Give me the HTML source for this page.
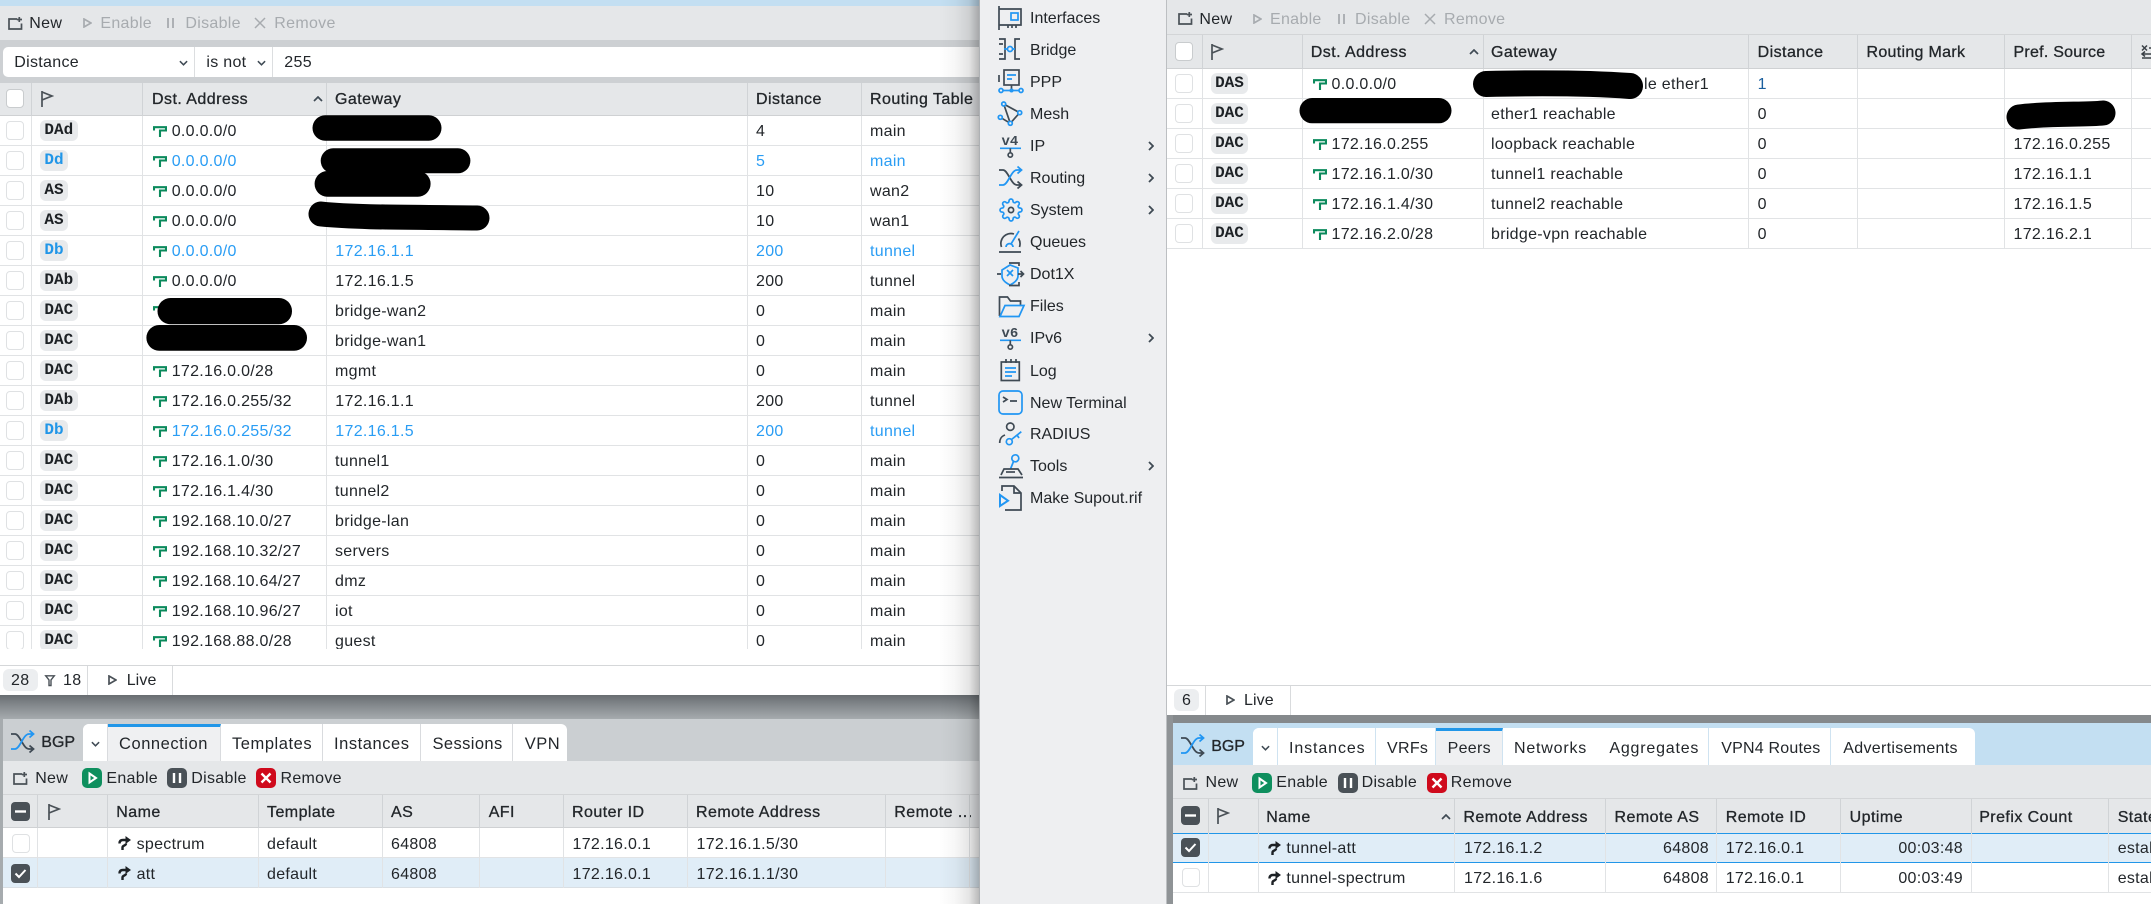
<!DOCTYPE html>
<html><head><meta charset="utf-8"><title>RouterOS</title>
<style>
html,body{margin:0;padding:0;width:2151px;height:904px;overflow:hidden;background:#fff}
body{position:relative;font-family:"Liberation Sans",sans-serif;font-size:16px;color:#22262a}
.a{position:absolute}
.x{position:absolute;white-space:nowrap;line-height:20px;font-size:16px;letter-spacing:.3px;color:#22262a;margin-top:1px}
.h{-webkit-text-stroke:.3px #22262a;letter-spacing:.45px}
.dis{color:#a7abaf}
.tab{letter-spacing:.55px;font-size:16.5px}
.tb{position:absolute;top:0;height:100%;background:#fff;border-right:1px solid #d9dbde;box-sizing:border-box}
.tc{border-right-color:#cfe3f1}
.v{position:absolute;width:1px;background:#e1e3e5}
.vh{position:absolute;width:1px;background:#d0d3d6}
.r{position:absolute;height:30px;box-sizing:border-box;border-bottom:1px solid #e1e3e5}
.r>span{position:absolute;top:6px;white-space:nowrap;line-height:20px;letter-spacing:.3px}
.b>span{color:#2a9df4}
.g{position:absolute;top:4px;height:21px;padding:0 4.4px;font:bold 16px/21px "Liberation Mono",monospace;background:#e8eaec;border-radius:6px;color:#1d2125}
.b>.g{color:#2196e8}
.c{position:absolute;width:18px;height:19px;border:1px solid #dfe1e3;border-radius:4px;background:#fff;box-sizing:border-box}
.ck{position:absolute;width:19px;height:19px;border-radius:4px;background:#4a5157}
svg{position:absolute;overflow:visible}
.ri{width:14px;height:11px;top:10px}
.m{position:absolute;left:1030px;line-height:20px;white-space:nowrap;color:#22262a;margin-top:1px}
.ic{left:998px;width:26px;height:26px}
.cv{left:1148px;width:6px;height:10px}
.L{fill:none;stroke:#3f4a54;stroke-width:1.7}
.B{fill:none;stroke:#2196f3;stroke-width:1.7}
</style></head>
<body>
<svg width="0" height="0" style="position:absolute">
<defs>
<symbol id="rt" viewBox="0 0 14 11"><path d="M1 4.500V1.200H13V4.500H7V11" fill="none" stroke="#0b8a5c" stroke-width="2.100"/></symbol>
<symbol id="pe" viewBox="0 0 13 14"><path d="M1.500 7.500C1.500 5 3 4 5 4H9" fill="none" stroke="#1d2125" stroke-width="2.400"/><path d="M7.500 0L13 4 7.500 8Z" fill="#1d2125"/><path d="M8 7.500c0 2.500-3.500 1.500-3.500 4V14" fill="none" stroke="#1d2125" stroke-width="2.400"/></symbol>
<symbol id="nw" viewBox="0 0 15 13"><path d="M9 2H1V12H13.500V6.500M11.300 0V5M8.800 2.500H14" fill="none" stroke="#4a5157" stroke-width="1.700"/></symbol>
<symbol id="fl" viewBox="0 0 13 16"><path d="M1 0V16M1 1L11 5 1 9" fill="none" stroke="#4a5157" stroke-width="1.700"/></symbol>
<symbol id="sf" viewBox="0 0 26 26"><path d="M1 5H5C10 5 13 20 19 20H23M19.500 16.500L23.500 20 19.500 23.500" fill="none" stroke="#3f4a54" stroke-width="1.800"/><path d="M1 20H5C10 20 13 5 19 5H23M19.500 1.500L23.500 5 19.500 8.500" fill="none" stroke="#2196f3" stroke-width="1.800"/></symbol>
<symbol id="gr" viewBox="0 0 20 20"><rect width="20" height="20" rx="5" fill="#0e8f5e"/><path d="M7.500 5.500L14 10 7.500 14.500Z" fill="none" stroke="#fff" stroke-width="2"/></symbol>
<symbol id="gy" viewBox="0 0 20 20"><rect width="20" height="20" rx="5" fill="#4a5157"/><path d="M7 5V15M13 5V15" stroke="#fff" stroke-width="2.400"/></symbol>
<symbol id="rd" viewBox="0 0 20 20"><rect width="20" height="20" rx="5" fill="#cf0a1c"/><path d="M5.500 5.500L14.500 14.500M14.500 5.500L5.500 14.500" stroke="#fff" stroke-width="2.400"/></symbol>
<symbol id="pl" viewBox="0 0 9 10"><path d="M1 1L8 5 1 9Z" fill="none" stroke="currentColor" stroke-width="1.700"/></symbol>
<symbol id="chv" viewBox="0 0 10 6"><path d="M1 1L5 5 9 1" fill="none" stroke="#3f4a54" stroke-width="1.700"/></symbol>
<symbol id="chr" viewBox="0 0 6 10"><path d="M1 1L5 5 1 9" fill="none" stroke="#3f4a54" stroke-width="1.800"/></symbol>
<symbol id="up" viewBox="0 0 10 6"><path d="M1 5L5 1 9 5" fill="none" stroke="#3f4a54" stroke-width="1.700"/></symbol>
</defs></svg>

<!-- LEFT WINDOW -->
<div class="a" style="left:0;top:0;width:979px;height:6px;background:#c3dff2"></div>
<div class="a" style="left:0;top:6px;width:979px;height:34px;background:#e5e7e9"></div>
<div class="a" style="left:0;top:40px;width:979px;height:43px;background:#cdd0d3"></div>
<div class="a" style="left:3px;top:47px;width:976px;height:30px;background:#fff;border-radius:5px 0 0 5px"></div>
<svg style="left:8px;top:17px;width:15px;height:13px"><use href="#nw"/></svg>
<span class="x" style="left:29.3px;top:13px">New</span>
<svg class="dis" style="left:82.5px;top:18px;width:9px;height:10px"><use href="#pl"/></svg>
<span class="x dis" style="left:100.4px;top:13px">Enable</span>
<svg style="left:167px;top:18px;width:8px;height:10px"><path d="M1 0V10M6 0V10" stroke="#a7abaf" stroke-width="1.800"/></svg>
<span class="x dis" style="left:185.4px;top:13px">Disable</span>
<svg style="left:255px;top:18px;width:10px;height:10px"><path d="M0 0L10 10M10 0L0 10" stroke="#a7abaf" stroke-width="1.500"/></svg>
<span class="x dis" style="left:274.3px;top:13px">Remove</span>

<span class="x" style="left:14.3px;top:52px">Distance</span>
<svg style="left:179px;top:60px;width:9px;height:6px"><use href="#chv"/></svg>
<div class="a" style="left:194px;top:47px;width:1px;height:30px;background:#dcdee0"></div>
<span class="x" style="left:206.4px;top:52px">is not</span>
<svg style="left:257px;top:60px;width:9px;height:6px"><use href="#chv"/></svg>
<div class="a" style="left:272px;top:47px;width:1px;height:30px;background:#dcdee0"></div>
<span class="x" style="left:284.3px;top:52px">255</span>

<div class="a" style="left:0;top:83px;width:979px;height:33px;background:#e5e7e9;border-bottom:1px solid #cfd1d3;box-sizing:border-box"></div>
<div class="c" style="left:5.7px;top:89px;border-color:#c9ccce"></div>
<svg style="left:41px;top:91px;width:13px;height:16px"><use href="#fl"/></svg>
<span class="x h" style="left:152px;top:89px">Dst. Address</span>
<svg style="left:313px;top:96px;width:10px;height:6px"><use href="#up"/></svg>
<span class="x h" style="left:335px;top:89px">Gateway</span>
<span class="x h" style="left:756px;top:89px">Distance</span>
<span class="x h" style="left:870px;top:89px">Routing Table</span>
<div class="vh" style="left:31px;top:83px;height:33px"></div><div class="vh" style="left:142px;top:83px;height:33px"></div><div class="vh" style="left:326px;top:83px;height:33px"></div><div class="vh" style="left:747px;top:83px;height:33px"></div><div class="vh" style="left:861px;top:83px;height:33px"></div>

<div class="a" style="left:0;top:116px;width:979px;height:533px;overflow:hidden">
<div class="r" style="top:0;left:0;width:979px"><i class="c" style="left:5.7px;top:5px"></i><b class="g" style="left:40px">DAd</b><svg class="ri" style="left:152.5px"><use href="#rt"/></svg><span style="left:171.7px">0.0.0.0/0</span><span style="left:756px">4</span><span style="left:870px">main</span></div>
<div class="r b" style="top:30px;left:0;width:979px"><i class="c" style="left:5.7px;top:5px"></i><b class="g" style="left:40px">Dd</b><svg class="ri" style="left:152.5px"><use href="#rt"/></svg><span style="left:171.7px">0.0.0.0/0</span><span style="left:756px">5</span><span style="left:870px">main</span></div>
<div class="r" style="top:60px;left:0;width:979px"><i class="c" style="left:5.7px;top:5px"></i><b class="g" style="left:40px">AS</b><svg class="ri" style="left:152.5px"><use href="#rt"/></svg><span style="left:171.7px">0.0.0.0/0</span><span style="left:756px">10</span><span style="left:870px">wan2</span></div>
<div class="r" style="top:90px;left:0;width:979px"><i class="c" style="left:5.7px;top:5px"></i><b class="g" style="left:40px">AS</b><svg class="ri" style="left:152.5px"><use href="#rt"/></svg><span style="left:171.7px">0.0.0.0/0</span><span style="left:756px">10</span><span style="left:870px">wan1</span></div>
<div class="r b" style="top:120px;left:0;width:979px"><i class="c" style="left:5.7px;top:5px"></i><b class="g" style="left:40px">Db</b><svg class="ri" style="left:152.5px"><use href="#rt"/></svg><span style="left:171.7px">0.0.0.0/0</span><span style="left:335.3px">172.16.1.1</span><span style="left:756px">200</span><span style="left:870px">tunnel</span></div>
<div class="r" style="top:150px;left:0;width:979px"><i class="c" style="left:5.7px;top:5px"></i><b class="g" style="left:40px">DAb</b><svg class="ri" style="left:152.5px"><use href="#rt"/></svg><span style="left:171.7px">0.0.0.0/0</span><span style="left:335.3px">172.16.1.5</span><span style="left:756px">200</span><span style="left:870px">tunnel</span></div>
<div class="r" style="top:180px;left:0;width:979px"><i class="c" style="left:5.7px;top:5px"></i><b class="g" style="left:40px">DAC</b><svg class="ri" style="left:152.5px"><use href="#rt"/></svg><span style="left:335px">bridge-wan2</span><span style="left:756px">0</span><span style="left:870px">main</span></div>
<div class="r" style="top:210px;left:0;width:979px"><i class="c" style="left:5.7px;top:5px"></i><b class="g" style="left:40px">DAC</b><svg class="ri" style="left:152.5px"><use href="#rt"/></svg><span style="left:335px">bridge-wan1</span><span style="left:756px">0</span><span style="left:870px">main</span></div>
<div class="r" style="top:240px;left:0;width:979px"><i class="c" style="left:5.7px;top:5px"></i><b class="g" style="left:40px">DAC</b><svg class="ri" style="left:152.5px"><use href="#rt"/></svg><span style="left:171.7px">172.16.0.0/28</span><span style="left:335px">mgmt</span><span style="left:756px">0</span><span style="left:870px">main</span></div>
<div class="r" style="top:270px;left:0;width:979px"><i class="c" style="left:5.7px;top:5px"></i><b class="g" style="left:40px">DAb</b><svg class="ri" style="left:152.5px"><use href="#rt"/></svg><span style="left:171.7px">172.16.0.255/32</span><span style="left:335.3px">172.16.1.1</span><span style="left:756px">200</span><span style="left:870px">tunnel</span></div>
<div class="r b" style="top:300px;left:0;width:979px"><i class="c" style="left:5.7px;top:5px"></i><b class="g" style="left:40px">Db</b><svg class="ri" style="left:152.5px"><use href="#rt"/></svg><span style="left:171.7px">172.16.0.255/32</span><span style="left:335.3px">172.16.1.5</span><span style="left:756px">200</span><span style="left:870px">tunnel</span></div>
<div class="r" style="top:330px;left:0;width:979px"><i class="c" style="left:5.7px;top:5px"></i><b class="g" style="left:40px">DAC</b><svg class="ri" style="left:152.5px"><use href="#rt"/></svg><span style="left:171.7px">172.16.1.0/30</span><span style="left:335px">tunnel1</span><span style="left:756px">0</span><span style="left:870px">main</span></div>
<div class="r" style="top:360px;left:0;width:979px"><i class="c" style="left:5.7px;top:5px"></i><b class="g" style="left:40px">DAC</b><svg class="ri" style="left:152.5px"><use href="#rt"/></svg><span style="left:171.7px">172.16.1.4/30</span><span style="left:335px">tunnel2</span><span style="left:756px">0</span><span style="left:870px">main</span></div>
<div class="r" style="top:390px;left:0;width:979px"><i class="c" style="left:5.7px;top:5px"></i><b class="g" style="left:40px">DAC</b><svg class="ri" style="left:152.5px"><use href="#rt"/></svg><span style="left:171.7px">192.168.10.0/27</span><span style="left:335px">bridge-lan</span><span style="left:756px">0</span><span style="left:870px">main</span></div>
<div class="r" style="top:420px;left:0;width:979px"><i class="c" style="left:5.7px;top:5px"></i><b class="g" style="left:40px">DAC</b><svg class="ri" style="left:152.5px"><use href="#rt"/></svg><span style="left:171.7px">192.168.10.32/27</span><span style="left:335px">servers</span><span style="left:756px">0</span><span style="left:870px">main</span></div>
<div class="r" style="top:450px;left:0;width:979px"><i class="c" style="left:5.7px;top:5px"></i><b class="g" style="left:40px">DAC</b><svg class="ri" style="left:152.5px"><use href="#rt"/></svg><span style="left:171.7px">192.168.10.64/27</span><span style="left:335px">dmz</span><span style="left:756px">0</span><span style="left:870px">main</span></div>
<div class="r" style="top:480px;left:0;width:979px"><i class="c" style="left:5.7px;top:5px"></i><b class="g" style="left:40px">DAC</b><svg class="ri" style="left:152.5px"><use href="#rt"/></svg><span style="left:171.7px">192.168.10.96/27</span><span style="left:335px">iot</span><span style="left:756px">0</span><span style="left:870px">main</span></div>
<div class="r" style="top:510px;left:0;width:979px"><i class="c" style="left:5.7px;top:5px"></i><b class="g" style="left:40px">DAC</b><svg class="ri" style="left:152.5px"><use href="#rt"/></svg><span style="left:171.7px">192.168.88.0/28</span><span style="left:335px">guest</span><span style="left:756px">0</span><span style="left:870px">main</span></div>
<div class="v" style="left:31px;top:0;height:533px"></div><div class="v" style="left:142px;top:0;height:533px"></div><div class="v" style="left:326px;top:0;height:533px"></div><div class="v" style="left:747px;top:0;height:533px"></div><div class="v" style="left:861px;top:0;height:533px"></div>
</div>

<div class="a" style="left:0;top:665px;width:979px;height:30px;border-top:1px solid #d5d7d9;box-sizing:border-box;background:#fff"></div>
<div class="a" style="left:3px;top:669px;width:34.5px;height:22px;background:#eceef0;border-radius:6px"></div>
<span class="x" style="left:11px;top:670px">28</span>
<svg style="left:45px;top:675px;width:10px;height:11px"><path d="M.7 .8H9.3L6 5V10.5H4V5Z" fill="none" stroke="#4a5157" stroke-width="1.400"/></svg>
<span class="x" style="left:63px;top:670px">18</span>
<div class="a" style="left:87px;top:666px;width:1px;height:29px;background:#d9dbdd"></div>
<svg style="left:108px;top:675px;width:9px;height:10px;color:#4a5157"><use href="#pl"/></svg>
<span class="x" style="left:126.7px;top:670px;letter-spacing:.1px">Live</span>
<div class="a" style="left:172px;top:666px;width:1px;height:29px;background:#d9dbdd"></div>

<div class="a" style="left:0;top:695px;width:979px;height:24px;background:linear-gradient(#686d71,#7f8488 35%,#a6abae)"></div>
<div class="a" style="left:0;top:719px;width:3px;height:185px;background:#a6abae"></div>
<div class="a" style="left:3px;top:719px;width:976px;height:42px;background:#cbcfd2"></div>
<svg style="left:9.5px;top:729px;width:26px;height:26px"><use href="#sf"/></svg>
<span class="x" style="left:41.3px;top:732px;font-size:16px;letter-spacing:0;-webkit-text-stroke:.3px #22262a">BGP</span>
<div class="a" style="left:83px;top:724px;width:484px;height:37px;border-radius:6px 6px 0 0;overflow:hidden;background:#fff">
 <div class="tb" style="left:0;width:25px"></div>
 <div class="tb" style="left:25px;width:113px;background:#eff0f2;border-top:3px solid #2196e8"></div>
 <div class="tb" style="left:138px;width:102px"></div>
 <div class="tb" style="left:240px;width:98px"></div>
 <div class="tb" style="left:338px;width:92px"></div>
</div>
<svg style="left:91px;top:741px;width:9px;height:6px"><use href="#chv"/></svg>
<span class="x tab" style="left:119px;top:733px">Connection</span>
<span class="x tab" style="left:232px;top:733px">Templates</span>
<span class="x tab" style="left:334px;top:733px">Instances</span>
<span class="x tab" style="left:432.5px;top:733px;letter-spacing:.4px">Sessions</span>
<span class="x tab" style="left:524.7px;top:733px">VPN</span>

<div class="a" style="left:3px;top:761px;width:976px;height:34px;background:#e5e7e9;border-bottom:1px solid #d3d5d7;box-sizing:border-box"></div>
<svg style="left:13.4px;top:772px;width:15px;height:13px"><use href="#nw"/></svg>
<span class="x" style="left:35.2px;top:768px">New</span>
<svg style="left:82px;top:768px;width:20px;height:20px"><use href="#gr"/></svg>
<span class="x" style="left:106.4px;top:768px">Enable</span>
<svg style="left:167px;top:768px;width:20px;height:20px"><use href="#gy"/></svg>
<span class="x" style="left:191.3px;top:768px">Disable</span>
<svg style="left:256px;top:768px;width:20px;height:20px"><use href="#rd"/></svg>
<span class="x" style="left:280.5px;top:768px">Remove</span>

<div class="a" style="left:3px;top:795px;width:976px;height:33px;background:#e5e7e9;border-bottom:1px solid #cfd1d3;box-sizing:border-box"></div>
<div class="ck" style="left:11px;top:802px"><svg style="left:4px;top:8px;width:11px;height:3px"><path d="M0 1.500H11" stroke="#fff" stroke-width="2.400"/></svg></div>
<svg style="left:47.5px;top:804px;width:13px;height:16px"><use href="#fl"/></svg>
<span class="x h" style="left:116.3px;top:802px">Name</span>
<span class="x h" style="left:267px;top:802px">Template</span>
<span class="x h" style="left:391px;top:802px">AS</span>
<span class="x h" style="left:488.7px;top:802px">AFI</span>
<span class="x h" style="left:572px;top:802px">Router ID</span>
<span class="x h" style="left:696px;top:802px">Remote Address</span>
<span class="x h" style="left:894.3px;top:802px">Remote ...</span>
<div class="a" style="left:3px;top:828px;width:976px;height:30px;box-sizing:border-box;border-bottom:1px solid #e1e3e5"></div>
<div class="a" style="left:3px;top:858px;width:976px;height:30px;box-sizing:border-box;border-bottom:1px solid #d9dfe4;background:#e0edf7"></div>
<div class="c" style="left:11.5px;top:834px"></div>
<div class="ck" style="left:11px;top:864px"><svg style="left:4px;top:5px;width:11px;height:9px"><path d="M.5 4.500L4 8 10.500 1" fill="none" stroke="#fff" stroke-width="2"/></svg></div>
<svg style="left:117.500px;top:836px;width:13px;height:14px"><use href="#pe"/></svg>
<span class="x" style="left:136.6px;top:834px">spectrum</span>
<span class="x" style="left:267px;top:834px">default</span>
<span class="x" style="left:391px;top:834px">64808</span>
<span class="x" style="left:572.5px;top:834px">172.16.0.1</span>
<span class="x" style="left:696.5px;top:834px">172.16.1.5/30</span>
<svg style="left:117.500px;top:866px;width:13px;height:14px"><use href="#pe"/></svg>
<span class="x" style="left:136.6px;top:864px">att</span>
<span class="x" style="left:267px;top:864px">default</span>
<span class="x" style="left:391px;top:864px">64808</span>
<span class="x" style="left:572.5px;top:864px">172.16.0.1</span>
<span class="x" style="left:696.5px;top:864px">172.16.1.1/30</span>
<div class="vh" style="left:37px;top:795px;height:33px"></div><div class="vh" style="left:107px;top:795px;height:33px"></div><div class="vh" style="left:258px;top:795px;height:33px"></div><div class="vh" style="left:382px;top:795px;height:33px"></div><div class="vh" style="left:479px;top:795px;height:33px"></div><div class="vh" style="left:563px;top:795px;height:33px"></div><div class="vh" style="left:687px;top:795px;height:33px"></div><div class="vh" style="left:885px;top:795px;height:33px"></div><div class="vh" style="left:969px;top:795px;height:33px"></div>
<div class="v" style="left:37px;top:828px;height:60px"></div><div class="v" style="left:107px;top:828px;height:60px"></div><div class="v" style="left:258px;top:828px;height:60px"></div><div class="v" style="left:382px;top:828px;height:60px"></div><div class="v" style="left:479px;top:828px;height:60px"></div><div class="v" style="left:563px;top:828px;height:60px"></div><div class="v" style="left:687px;top:828px;height:60px"></div><div class="v" style="left:885px;top:828px;height:60px"></div><div class="v" style="left:969px;top:828px;height:60px"></div>

<!-- SHADOW + SIDEBAR -->
<div class="a" style="left:939px;top:0;width:40px;height:904px;background:linear-gradient(90deg,rgba(0,0,0,0),rgba(0,0,0,.03) 40%,rgba(0,0,0,.1) 75%,rgba(0,0,0,.27))"></div>
<div class="a" style="left:979px;top:0;width:188px;height:904px;background:#eeeff1;border-left:1px solid #aeb1b4;border-right:1px solid #bcbfc2;box-sizing:border-box"></div>

<svg class="ic" style="top:5px"><path class="L" d="M1 1V25M1 4H23V20H1M10 20V23M14 20V23M18 20V23"/><rect class="B" x="13" y="8" width="7" height="7"/></svg>
<span class="m" style="top:8px">Interfaces</span>
<svg class="ic" style="top:37px"><path class="L" d="M1 2H7V22H1M1 7H5M1 17H5M22 2H17V22H22"/><path class="B" d="M6 12H9.500M14.500 12H17"/><circle class="B" cx="12" cy="12" r="2.500"/></svg>
<span class="m" style="top:40px">Bridge</span>
<svg class="ic" style="top:69px"><rect class="L" x="6" y="1" width="15" height="15"/><path class="B" d="M9 6H18M9 10H14"/><path class="L" d="M1 6V13M13.500 16V21"/><path class="B" d="M5 21.500H21"/><circle class="B" cx="3" cy="21.500" r="2"/><circle class="B" cx="23" cy="21.500" r="2"/><circle class="B" cx="13.500" cy="21.500" r="1.200"/></svg>
<span class="m" style="top:72px">PPP</span>
<svg class="ic" style="top:101px"><path class="L" d="M5.700 3L21.700 11.700 12.300 22.300 5.700 3M12.300 22.300L2.300 16.300"/><circle cx="5.700" cy="3" r="2" fill="#eeeff1" stroke="#2196f3" stroke-width="1.700"/><circle cx="21.700" cy="11.700" r="2" fill="#eeeff1" stroke="#2196f3" stroke-width="1.700"/><circle cx="12.300" cy="22.300" r="2" fill="#eeeff1" stroke="#2196f3" stroke-width="1.700"/><circle cx="2.300" cy="16.300" r="2" fill="#eeeff1" stroke="#2196f3" stroke-width="1.700"/></svg>
<span class="m" style="top:104px">Mesh</span>
<svg class="ic" style="top:133px"><text x="3.500" y="12" font-family="Liberation Mono" font-weight="700" font-size="14" fill="#3f4a54">v4</text><path class="B" d="M2 15.300H23"/><path class="L" d="M12.300 15.300V19.500"/><circle class="L" cx="12.300" cy="22" r="2.200"/></svg>
<span class="m" style="top:136px">IP</span>
<svg class="cv" style="top:141px"><use href="#chr"/></svg>
<svg class="ic" style="top:165px"><use href="#sf"/></svg>
<span class="m" style="top:168px">Routing</span>
<svg class="cv" style="top:173px"><use href="#chr"/></svg>
<svg class="ic" style="top:197px" viewBox="-1 -1 26 26"><path class="B" d="M19.4 15a1.65 1.65 0 0 0 .33 1.82l.06.06a2 2 0 0 1 0 2.83 2 2 0 0 1-2.83 0l-.06-.06a1.65 1.65 0 0 0-1.82-.33 1.65 1.65 0 0 0-1 1.51V21a2 2 0 0 1-2 2 2 2 0 0 1-2-2v-.09A1.65 1.65 0 0 0 9 19.4a1.65 1.65 0 0 0-1.82.33l-.06.06a2 2 0 0 1-2.83 0 2 2 0 0 1 0-2.83l.06-.06a1.65 1.65 0 0 0 .33-1.82 1.65 1.65 0 0 0-1.51-1H3a2 2 0 0 1-2-2 2 2 0 0 1 2-2h.09A1.65 1.65 0 0 0 4.6 9a1.65 1.65 0 0 0-.33-1.82l-.06-.06a2 2 0 0 1 0-2.83 2 2 0 0 1 2.83 0l.06.06a1.65 1.65 0 0 0 1.82.33H9a1.65 1.65 0 0 0 1-1.51V3a2 2 0 0 1 2-2 2 2 0 0 1 2 2v.09a1.65 1.65 0 0 0 1 1.51 1.65 1.65 0 0 0 1.82-.33l.06-.06a2 2 0 0 1 2.83 0 2 2 0 0 1 0 2.83l-.06.06a1.65 1.65 0 0 0-.33 1.82V9a1.65 1.65 0 0 0 1.51 1H21a2 2 0 0 1 2 2 2 2 0 0 1-2 2h-.09a1.65 1.65 0 0 0-1.51 1z"/><circle class="L" cx="12" cy="12" r="2.600"/></svg>
<span class="m" style="top:200px">System</span>
<svg class="cv" style="top:205px"><use href="#chr"/></svg>
<svg class="ic" style="top:229px"><path class="L" d="M3.500 18A10 10 0 0 1 16 5M20.500 9.500A10 10 0 0 1 21.500 18M1 23H23"/><path class="B" d="M8 18A3.500 3.500 0 0 1 13 15L21 2M13 15A3.500 3.500 0 0 1 15 18"/></svg>
<span class="m" style="top:232px">Queues</span>
<svg class="ic" style="top:261px"><path class="B" d="M4 9L12 4 20 7V15C20 19 16 22 12 24 8 22 4 19 4 15Z"/><path class="B" d="M9 9L15 15M15 9L9 15"/><path class="L" d="M11 2H21V5M11 24.500H21V21M-1 13H3M20 13H25M22.500 10L25.500 13 22.500 16"/></svg>
<span class="m" style="top:264px">Dot1X</span>
<svg class="ic" style="top:293px"><path class="L" d="M1.500 23V4H9.500L12.500 8H22.500V12"/><path class="B" d="M7 12.500H26L21 23.500H2Z"/></svg>
<span class="m" style="top:296px">Files</span>
<svg class="ic" style="top:325px"><text x="3.500" y="12" font-family="Liberation Mono" font-weight="700" font-size="14" fill="#3f4a54">v6</text><path class="B" d="M2 15.300H23"/><path class="L" d="M12.300 15.300V19.500"/><circle class="L" cx="12.300" cy="22" r="2.200"/></svg>
<span class="m" style="top:328px">IPv6</span>
<svg class="cv" style="top:333px"><use href="#chr"/></svg>
<svg class="ic" style="top:358px"><rect class="L" x="3.300" y="4" width="18" height="18.500"/><path class="L" d="M8 1V5M13 1V5M18 1V5"/><path class="B" d="M7 10H18M7 14H18M7 18H14"/></svg>
<span class="m" style="top:361px">Log</span>
<svg class="ic" style="top:390px"><rect class="B" x="1" y="1" width="23" height="23" rx="4"/><path class="L" d="M5 7L9 9.500 5 12M12 11H19"/></svg>
<span class="m" style="top:393px">New Terminal</span>
<svg class="ic" style="top:421px"><circle class="L" cx="12.300" cy="5.700" r="3.700"/><path class="L" d="M1.700 22C1.700 18 3 15.500 7 14"/><circle class="B" cx="11.300" cy="20.700" r="3"/><path class="B" d="M13.500 18.500L23.300 10.700M19 14L21 17"/></svg>
<span class="m" style="top:424px">RADIUS</span>
<svg class="ic" style="top:453px"><circle class="B" cx="17.300" cy="5.300" r="3.500"/><path class="B" d="M15.500 8.500L12.500 16"/><path class="L" d="M3 22L6 16H20L24 22M1 24.500H25"/><path class="L" d="M8 19H17"/></svg>
<span class="m" style="top:456px">Tools</span>
<svg class="cv" style="top:461px"><use href="#chr"/></svg>
<svg class="ic" style="top:485px"><path class="L" d="M4 6V1H16L23 8V25H7"/><path class="L" d="M16 1V8H23"/><path d="M2 10L10 15.700 2 21Z" fill="none" stroke="#2196f3" stroke-width="2"/></svg>
<span class="m" style="top:488px">Make Supout.rif</span>

<!-- RIGHT WINDOW TOP -->
<div class="a" style="left:1167px;top:0;width:984px;height:35px;background:#e5e7e9;border-bottom:1px solid #d3d5d7;box-sizing:border-box"></div>
<svg style="left:1177.500px;top:12px;width:15px;height:13px"><use href="#nw"/></svg>
<span class="x" style="left:1199.400px;top:9px">New</span>
<svg class="dis" style="left:1252.500px;top:14px;width:9px;height:10px"><use href="#pl"/></svg>
<span class="x dis" style="left:1270px;top:9px">Enable</span>
<svg style="left:1337.500px;top:14px;width:8px;height:10px"><path d="M1 0V10M6 0V10" stroke="#a7abaf" stroke-width="1.800"/></svg>
<span class="x dis" style="left:1355px;top:9px">Disable</span>
<svg style="left:1425px;top:14px;width:10px;height:10px"><path d="M0 0L10 10M10 0L0 10" stroke="#a7abaf" stroke-width="1.500"/></svg>
<span class="x dis" style="left:1444px;top:9px">Remove</span>

<div class="a" style="left:1167px;top:35px;width:984px;height:34px;background:#e5e7e9;border-bottom:1px solid #cfd1d3;box-sizing:border-box"></div>
<div class="c" style="left:1175px;top:42px;border-color:#c9ccce"></div>
<svg style="left:1211px;top:44px;width:13px;height:16px"><use href="#fl"/></svg>
<span class="x h" style="left:1310.800px;top:42px">Dst. Address</span>
<svg style="left:1469px;top:49px;width:10px;height:6px"><use href="#up"/></svg>
<span class="x h" style="left:1491px;top:42px">Gateway</span>
<span class="x h" style="left:1757.600px;top:42px">Distance</span>
<span class="x h" style="left:1866.500px;top:42px;letter-spacing:.3px">Routing Mark</span>
<span class="x h" style="left:2013.500px;top:42px;letter-spacing:.25px">Pref. Source</span>
<svg style="left:2141px;top:45px;width:10px;height:15px"><path d="M1 0.500L6 5.500M6 0.500L1 5.500M8 3H10M1 9H10M4 6.500L1 9 4 11.500M1 13H10" fill="none" stroke="#3a4046" stroke-width="1.500"/></svg>
<div class="vh" style="left:1202px;top:35px;height:34px"></div><div class="vh" style="left:1302px;top:35px;height:34px"></div><div class="vh" style="left:1483px;top:35px;height:34px"></div><div class="vh" style="left:1748px;top:35px;height:34px"></div><div class="vh" style="left:1857px;top:35px;height:34px"></div><div class="vh" style="left:2004px;top:35px;height:34px"></div><div class="vh" style="left:2131px;top:35px;height:34px"></div>

<div class="r" style="left:1167px;width:984px;top:69px"><i class="c" style="left:8px;top:5px"></i><b class="g" style="left:43.700px">DAS</b><svg class="ri" style="left:146px"><use href="#rt"/></svg><span style="left:164.500px">0.0.0.0/0</span><span style="left:477px">le ether1</span><span style="left:590.600px;color:#1b5f9e">1</span></div>
<div class="r" style="left:1167px;width:984px;top:99px"><i class="c" style="left:8px;top:5px"></i><b class="g" style="left:43.700px">DAC</b><span style="left:324px">ether1 reachable</span><span style="left:590.600px">0</span></div>
<div class="r" style="left:1167px;width:984px;top:129px"><i class="c" style="left:8px;top:5px"></i><b class="g" style="left:43.700px">DAC</b><svg class="ri" style="left:146px"><use href="#rt"/></svg><span style="left:164.500px">172.16.0.255</span><span style="left:324px">loopback reachable</span><span style="left:590.600px">0</span><span style="left:846.500px">172.16.0.255</span></div>
<div class="r" style="left:1167px;width:984px;top:159px"><i class="c" style="left:8px;top:5px"></i><b class="g" style="left:43.700px">DAC</b><svg class="ri" style="left:146px"><use href="#rt"/></svg><span style="left:164.500px">172.16.1.0/30</span><span style="left:324px">tunnel1 reachable</span><span style="left:590.600px">0</span><span style="left:846.500px">172.16.1.1</span></div>
<div class="r" style="left:1167px;width:984px;top:189px"><i class="c" style="left:8px;top:5px"></i><b class="g" style="left:43.700px">DAC</b><svg class="ri" style="left:146px"><use href="#rt"/></svg><span style="left:164.500px">172.16.1.4/30</span><span style="left:324px">tunnel2 reachable</span><span style="left:590.600px">0</span><span style="left:846.500px">172.16.1.5</span></div>
<div class="r" style="left:1167px;width:984px;top:219px"><i class="c" style="left:8px;top:5px"></i><b class="g" style="left:43.700px">DAC</b><svg class="ri" style="left:146px"><use href="#rt"/></svg><span style="left:164.500px">172.16.2.0/28</span><span style="left:324px">bridge-vpn reachable</span><span style="left:590.600px">0</span><span style="left:846.500px">172.16.2.1</span></div>
<div class="v" style="left:1202px;top:69px;height:180px"></div><div class="v" style="left:1302px;top:69px;height:180px"></div><div class="v" style="left:1483px;top:69px;height:180px"></div><div class="v" style="left:1748px;top:69px;height:180px"></div><div class="v" style="left:1857px;top:69px;height:180px"></div><div class="v" style="left:2004px;top:69px;height:180px"></div><div class="v" style="left:2131px;top:69px;height:180px"></div>

<!-- RIGHT STATUS -->
<div class="a" style="left:1167px;top:685px;width:984px;height:30px;border-top:1px solid #d5d7d9;box-sizing:border-box"></div>
<div class="a" style="left:1174px;top:689px;width:25px;height:22px;background:#eceef0;border-radius:6px"></div>
<span class="x" style="left:1182px;top:690px">6</span>
<div class="a" style="left:1205px;top:686px;width:1px;height:29px;background:#d9dbdd"></div>
<svg style="left:1226px;top:695px;width:9px;height:10px;color:#4a5157"><use href="#pl"/></svg>
<span class="x" style="left:1244px;top:690px;letter-spacing:.1px">Live</span>
<div class="a" style="left:1290px;top:686px;width:1px;height:29px;background:#d9dbdd"></div>

<!-- RIGHT BGP -->
<div class="a" style="left:1167px;top:715px;width:984px;height:8px;background:#85898c"></div>
<div class="a" style="left:1167px;top:715px;width:6px;height:189px;background:#8f9396"></div>
<div class="a" style="left:1173px;top:723px;width:978px;height:42px;background:#c3dff2"></div>
<svg style="left:1180px;top:733px;width:26px;height:26px"><use href="#sf"/></svg>
<span class="x" style="left:1211.200px;top:736px;letter-spacing:0;-webkit-text-stroke:.3px #22262a">BGP</span>
<div class="a" style="left:1253px;top:728px;width:722.400px;height:37px;border-radius:6px 6px 0 0;overflow:hidden;background:#fff">
 <div class="tb tc" style="left:0;width:24.600px"></div>
 <div class="tb tc" style="left:24.600px;width:98px"></div>
 <div class="tb tc" style="left:122.600px;width:60px"></div>
 <div class="tb tc" style="left:182.600px;width:67px;background:#eff0f2;border-top:3px solid #2196e8"></div>
 <div class="tb tc" style="left:249.600px;width:95px"></div>
 <div class="tb tc" style="left:344.400px;width:112px"></div>
 <div class="tb tc" style="left:456.300px;width:122px"></div>
</div>
<svg style="left:1261px;top:745px;width:9px;height:6px"><use href="#chv"/></svg>
<span class="x" style="left:1289px;top:738px;letter-spacing:.9px">Instances</span>
<span class="x" style="left:1387px;top:738px">VRFs</span>
<span class="x" style="left:1447.600px;top:738px">Peers</span>
<span class="x" style="left:1514px;top:738px;letter-spacing:.8px">Networks</span>
<span class="x" style="left:1609.400px;top:738px;letter-spacing:.8px">Aggregates</span>
<span class="x" style="left:1721.300px;top:738px;letter-spacing:.2px">VPN4 Routes</span>
<span class="x" style="left:1843.300px;top:738px">Advertisements</span>

<div class="a" style="left:1173px;top:765px;width:978px;height:34px;background:#e5e7e9;border-bottom:1px solid #d3d5d7;box-sizing:border-box"></div>
<svg style="left:1183px;top:777px;width:15px;height:13px"><use href="#nw"/></svg>
<span class="x" style="left:1205.500px;top:772px">New</span>
<svg style="left:1252.300px;top:772.700px;width:20px;height:20px"><use href="#gr"/></svg>
<span class="x" style="left:1276.300px;top:772px">Enable</span>
<svg style="left:1337.600px;top:772.700px;width:20px;height:20px"><use href="#gy"/></svg>
<span class="x" style="left:1361.600px;top:772px">Disable</span>
<svg style="left:1426.500px;top:772.700px;width:20px;height:20px"><use href="#rd"/></svg>
<span class="x" style="left:1450.800px;top:772px">Remove</span>

<div class="a" style="left:1173px;top:799px;width:978px;height:34px;background:#e5e7e9"></div>
<div class="ck" style="left:1181px;top:806px"><svg style="left:4px;top:8px;width:11px;height:3px"><path d="M0 1.500H11" stroke="#fff" stroke-width="2.400"/></svg></div>
<svg style="left:1217px;top:808px;width:13px;height:16px"><use href="#fl"/></svg>
<span class="x h" style="left:1266.200px;top:807px">Name</span>
<svg style="left:1441px;top:814px;width:10px;height:6px"><use href="#up"/></svg>
<span class="x h" style="left:1463.400px;top:807px">Remote Address</span>
<span class="x h" style="left:1614.500px;top:807px">Remote AS</span>
<span class="x h" style="left:1725.700px;top:807px">Remote ID</span>
<span class="x h" style="left:1849.600px;top:807px">Uptime</span>
<span class="x h" style="left:1979.200px;top:807px">Prefix Count</span>
<span class="x h" style="left:2117.700px;top:807px">State</span>

<div class="a" style="left:1173px;top:833px;width:978px;height:30px;background:#e0edf7;border-top:1.500px solid #2196e8;border-bottom:1.500px solid #2196e8;box-sizing:border-box"></div>
<div class="a" style="left:1173px;top:863px;width:978px;height:30px;border-bottom:1px solid #e1e3e5;box-sizing:border-box"></div>
<div class="ck" style="left:1181px;top:838px"><svg style="left:4px;top:5px;width:11px;height:9px"><path d="M.5 4.500L4 8 10.500 1" fill="none" stroke="#fff" stroke-width="2"/></svg></div>
<div class="c" style="left:1181.500px;top:868px"></div>
<svg style="left:1268px;top:841px;width:13px;height:14px"><use href="#pe"/></svg>
<span class="x" style="left:1286.400px;top:838px">tunnel-att</span>
<span class="x" style="left:1464px;top:838px">172.16.1.2</span>
<span class="x" style="right:442px;top:838px">64808</span>
<span class="x" style="left:1725.700px;top:838px">172.16.0.1</span>
<span class="x" style="right:188px;top:838px">00:03:48</span>
<span class="x" style="left:2117.700px;top:838px">established</span>
<svg style="left:1268px;top:871px;width:13px;height:14px"><use href="#pe"/></svg>
<span class="x" style="left:1286.400px;top:868px">tunnel-spectrum</span>
<span class="x" style="left:1464px;top:868px">172.16.1.6</span>
<span class="x" style="right:442px;top:868px">64808</span>
<span class="x" style="left:1725.700px;top:868px">172.16.0.1</span>
<span class="x" style="right:188px;top:868px">00:03:49</span>
<span class="x" style="left:2117.700px;top:868px">established</span>
<div class="vh" style="left:1208px;top:799px;height:34px"></div><div class="vh" style="left:1258px;top:799px;height:34px"></div><div class="vh" style="left:1454px;top:799px;height:34px"></div><div class="vh" style="left:1605px;top:799px;height:34px"></div><div class="vh" style="left:1716px;top:799px;height:34px"></div><div class="vh" style="left:1840px;top:799px;height:34px"></div><div class="vh" style="left:1971px;top:799px;height:34px"></div><div class="vh" style="left:2108px;top:799px;height:34px"></div>
<div class="v" style="left:1208px;top:833px;height:60px"></div><div class="v" style="left:1258px;top:833px;height:60px"></div><div class="v" style="left:1454px;top:833px;height:60px"></div><div class="v" style="left:1605px;top:833px;height:60px"></div><div class="v" style="left:1716px;top:833px;height:60px"></div><div class="v" style="left:1840px;top:833px;height:60px"></div><div class="v" style="left:1971px;top:833px;height:60px"></div><div class="v" style="left:2108px;top:833px;height:60px"></div>

<!-- REDACTIONS -->
<svg style="left:0;top:0;width:2151px;height:904px">
<rect x="312.500" y="115.300" width="129" height="25.400" rx="12.700"/>
<rect x="320.700" y="148.300" width="149.700" height="25" rx="12.500"/>
<rect x="314.600" y="171" width="116" height="25.700" rx="12.800"/>
<path d="M321 214C360 218 420 217 477 218" fill="none" stroke="#000" stroke-width="25" stroke-linecap="round"/>
<rect x="157.500" y="298" width="134.500" height="26.300" rx="13"/>
<rect x="146.400" y="325" width="160.600" height="25.700" rx="12.800"/>
<path d="M1486 84C1530 83 1590 83 1630 86" fill="none" stroke="#000" stroke-width="26" stroke-linecap="round"/>
<rect x="1299.500" y="98" width="152" height="25.300" rx="12.600"/>
<path d="M2019 117C2050 113 2085 115 2103 113" fill="none" stroke="#000" stroke-width="25" stroke-linecap="round"/>
</svg>
</body></html>
